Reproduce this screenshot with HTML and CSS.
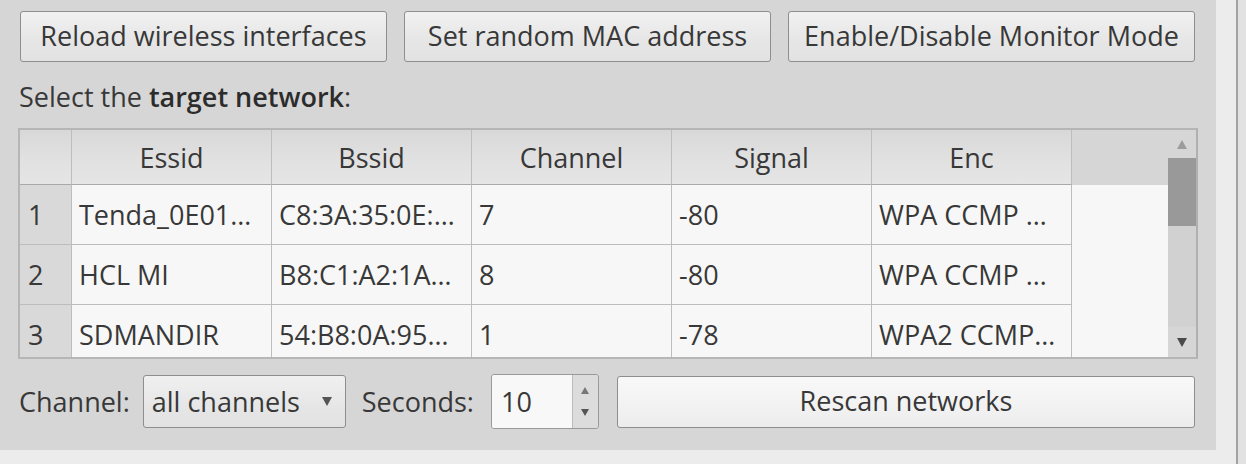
FILE: index.html
```html
<!DOCTYPE html>
<html>
<head>
<meta charset="utf-8">
<link rel="stylesheet" href="styles.css">
</head>
<body>
<div class="screen">
  <div class="left">
    <div class="main">
      <div class="btnrow">
        <button class="btn btn-a">Reload wireless interfaces</button>
        <button class="btn btn-a">Set random MAC address</button>
        <button class="btn btn-b">Enable/Disable Monitor Mode</button>
      </div>
      <div class="prompt">Select the <b>target network</b>:</div>
      <div class="tableview">
        <div class="viewport">
          <div class="grid">
            <div class="hc corner"></div>
            <div class="hc">Essid</div>
            <div class="hc">Bssid</div>
            <div class="hc">Channel</div>
            <div class="hc">Signal</div>
            <div class="hc">Enc</div>
            <div class="fill-h"></div>

            <div class="rh">1</div>
            <div class="cell">Tenda_0E01…</div>
            <div class="cell">C8:3A:35:0E:…</div>
            <div class="cell">7</div>
            <div class="cell">-80</div>
            <div class="cell">WPA CCMP …</div>
            <div class="fill"></div>

            <div class="rh">2</div>
            <div class="cell">HCL MI</div>
            <div class="cell">B8:C1:A2:1A…</div>
            <div class="cell">8</div>
            <div class="cell">-80</div>
            <div class="cell">WPA CCMP …</div>
            <div class="fill"></div>

            <div class="rh">3</div>
            <div class="cell">SDMANDIR</div>
            <div class="cell">54:B8:0A:95…</div>
            <div class="cell">1</div>
            <div class="cell">-78</div>
            <div class="cell">WPA2 CCMP…</div>
            <div class="fill"></div>
          </div>
        </div>
        <div class="vscroll">
          <div class="sb-arrow"><span class="tri-up dim"></span></div>
          <div class="sb-handle"></div>
          <div class="sb-track"></div>
          <div class="sb-arrow"><span class="tri-down"></span></div>
        </div>
      </div>
      <div class="controls">
        <span class="lbl">Channel:</span>
        <div class="combo"><span class="combo-text">all channels</span><span class="tri-down"></span></div>
        <span class="lbl">Seconds:</span>
        <div class="spin">
          <div class="spin-field">10</div>
          <div class="spin-btns"><span class="tri-up small"></span><span class="tri-down small"></span></div>
        </div>
        <button class="btn rescan">Rescan networks</button>
      </div>
    </div>
    <div class="bottomstrip"></div>
  </div>
  <div class="side"></div>
  <div class="vline"></div>
  <div class="rest"></div>
</div>
</body>
</html>
```
FILE: styles.css
```css
* { box-sizing: border-box; }
html, body {
  margin: 0;
  padding: 0;
  width: 1246px;
  height: 464px;
  overflow: hidden;
  background: #ececec;
  font-family: "Open Sans", "Noto Sans", sans-serif;
  font-size: 27px;
  color: #383838;
}
.screen {
  display: flex;
  width: 1246px;
  height: 464px;
}
.left {
  width: 1216px;
  display: flex;
  flex-direction: column;
}
.main {
  height: 450px;
  background: #d6d6d6;
  padding: 11px 21px 0 18px;
}
.bottomstrip { flex: 1; background: #ececec; }
.side { width: 20px; background: #ececec; }
.vline { width: 2px; background: #a2a2a2; }
.rest { flex: 1; background: #e2e2e2; }

.btnrow {
  display: flex;
  gap: 17px;
  padding-left: 2px;
}
.btn {
  font-family: inherit;
  font-size: 27px;
  color: #383838;
  height: 51px;
  border: 1px solid #8e8e8e;
  border-radius: 3px;
  background: linear-gradient(#f1f1f1, #e6e6e6 60%, #e2e2e2);
  padding: 0 0 2px 0;
  display: flex;
  align-items: center;
  justify-content: center;
}
.btn-a { width: 367px; }
.btn-b { width: 407px; }

.prompt {
  margin: 20px 0 16px 1px;
  height: 30px;
  line-height: 30px;
}
.prompt b { font-weight: 600; color: #2c2c2c; }

.tableview {
  display: flex;
  width: 1180px;
  height: 231px;
  border: 2px solid #b6b6b6;
  border-right-color: #b0b0b0;
}
.viewport {
  flex: 1;
  overflow: hidden;
  background: #d6d6d6;
}
.grid {
  display: grid;
  grid-template-columns: 52px repeat(5, 200px) 96px;
  grid-template-rows: 55px 60px 60px 60px;
}
.hc {
  background: linear-gradient(#d8d8d8, #e1e1e1 55%, #e5e5e5);
  border-right: 1px solid #bdbdbd;
  border-bottom: 1px solid #a9a9a9;
  display: flex;
  align-items: center;
  justify-content: center;
}
.fill-h { background: #d6d6d6; }
.rh {
  background: #d9d9d9;
  border-right: 1px solid #bdbdbd;
  border-bottom: 1px solid #bdbdbd;
  display: flex;
  align-items: center;
  padding-left: 8px;
}
.cell {
  background: #f7f7f7;
  border-right: 1px solid #bdbdbd;
  border-bottom: 1px solid #bdbdbd;
  display: flex;
  align-items: center;
  padding-left: 7px;
  white-space: nowrap;
  overflow: hidden;
}
.fill { background: #f7f7f7; }

.vscroll {
  width: 28px;
  display: flex;
  flex-direction: column;
  background: #d6d6d6;
}
.sb-arrow {
  height: 28px;
  display: flex;
  align-items: center;
  justify-content: center;
}
.sb-arrow:last-child { height: 30px; }
.sb-handle { height: 68px; background: #999999; }
.sb-track { flex: 1; background: #d1d1d1; }

.tri-up, .tri-down {
  display: inline-block;
  width: 0;
  height: 0;
  border-left: 5px solid transparent;
  border-right: 5px solid transparent;
}
.tri-up { border-bottom: 9px solid #555; }
.tri-down { border-top: 9px solid #4a4a4a; }
.tri-up.dim { border-bottom-color: #9c9c9c; }
.tri-up.small { border-left-width: 4px; border-right-width: 4px; border-bottom: 7px solid #777; }
.tri-down.small { border-left-width: 4px; border-right-width: 4px; border-top: 7px solid #555; }

.controls {
  display: flex;
  align-items: center;
  margin-top: 15px;
  height: 55px;
  padding-left: 1px;
}
.lbl { white-space: nowrap; }
.combo {
  margin-left: 13px;
  width: 203px;
  height: 53px;
  border: 1px solid #8e8e8e;
  border-radius: 3px;
  background: linear-gradient(#f0f0f0, #e6e6e6 60%, #e2e2e2);
  display: flex;
  align-items: center;
  justify-content: space-between;
  padding: 0 13px 0 8px;
  margin-right: 16px;
}
.combo .tri-down { border-top-color: #555; }
.spin {
  margin-left: 17px;
  width: 108px;
  height: 55px;
  border: 1px solid #9a9a9a;
  border-radius: 3px;
  display: flex;
  overflow: hidden;
}
.spin-field {
  flex: 1;
  background: #f8f8f8;
  display: flex;
  align-items: center;
  padding-left: 9px;
}
.spin-btns {
  width: 26px;
  background: #dcdcdc;
  border-left: 1px solid #bcbcbc;
  display: flex;
  flex-direction: column;
  align-items: center;
  justify-content: space-between;
  padding: 12px 0 12px;
}
.rescan {
  margin-left: 18px;
  flex: 1;
  height: 52px;
  background: linear-gradient(#f8f8f8, #f2f2f2 60%, #ececec);
}
```
